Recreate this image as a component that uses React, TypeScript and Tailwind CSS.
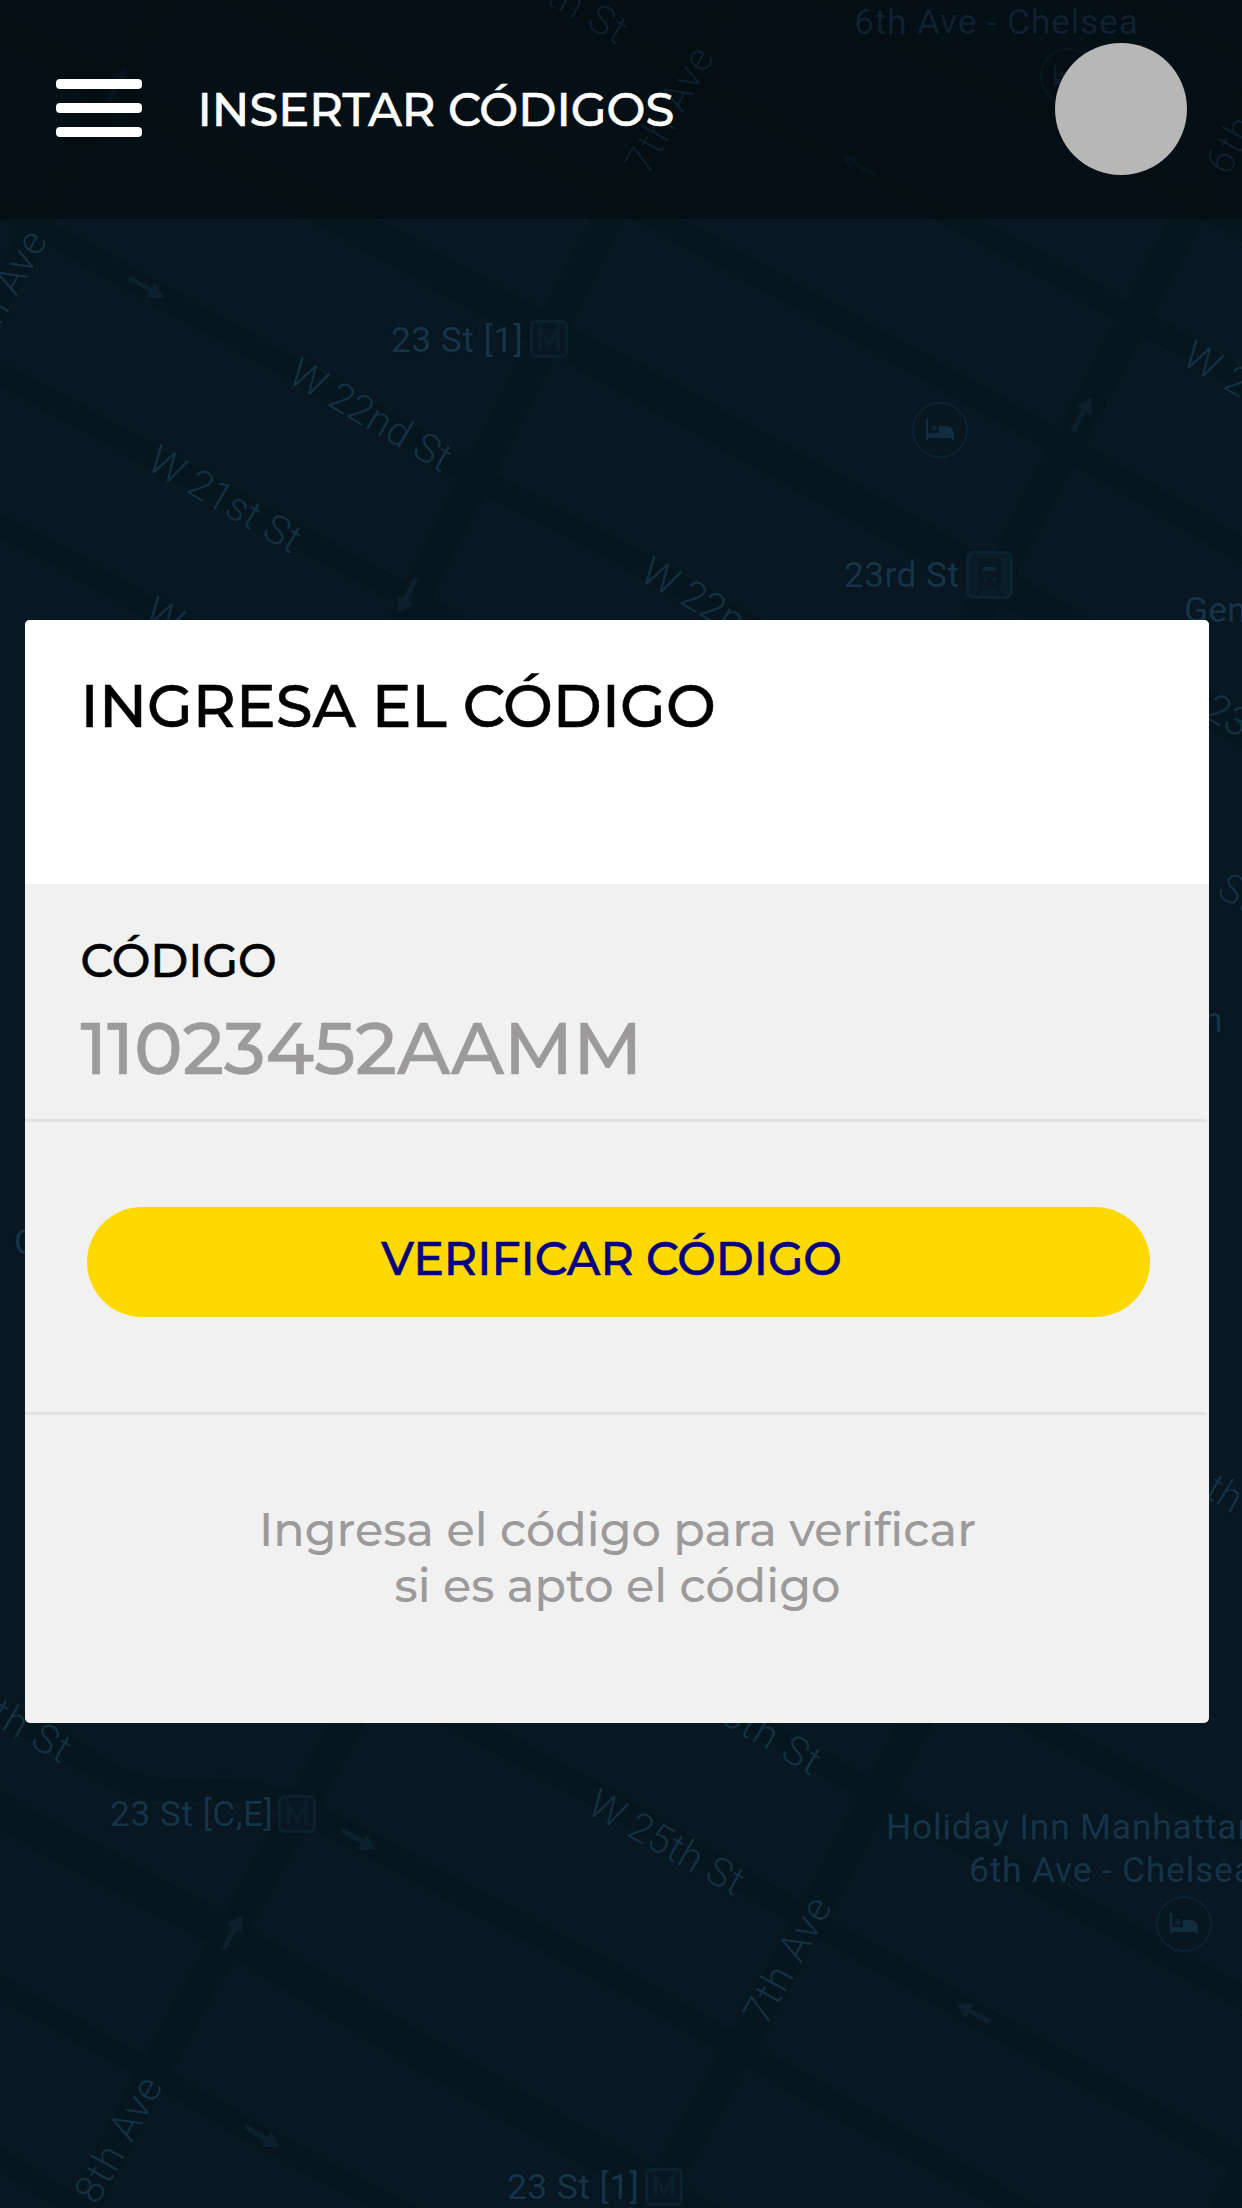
const STREETS: { d: string; w: number }[] = [
  { d: "M-20 15 L120 95 L341 218 L621 373 L940 550 L1262 740", w: 36 },
  { d: "M-20 195 L147 288 L372 413 L467 473 L621 553 L760 632", w: 24 },
  { d: "M-20 362 L226 497 L396 590 L480 640", w: 24 },
  { d: "M-20 515 L79 567 L190 632", w: 24 },
  { d: "M210 -16 L610 195 L660 220 L1064 445 L1262 562", w: 25 },
  { d: "M560 -8 L700 85 L830 155 L961 220 L1130 315 L1262 391", w: 24 },
  { d: "M810 -12 L917 50 L1017 100 L1175 190 L1262 240", w: 24 },
  { d: "M1110 -16 L1262 70", w: 24 },
  { d: "M-20 1700 L67 1748 C110 1775 130 1790 170 1790 C220 1790 250 1786 293 1805 L358 1838 L621 1980 L740 2050 L977 2184 L1040 2222", w: 25 },
  { d: "M-20 1800 L218 1929 L396 2037 L621 2168 L720 2228", w: 36 },
  { d: "M-20 1976 L139 2065 L261 2137 L420 2222", w: 23 },
  { d: "M-20 2147 L100 2222", w: 23 },
  { d: "M440 1710 L621 1808 L684 1846 L799 1914 L973 2013 L1262 2175", w: 25 },
  { d: "M740 1716 L878 1795 L1017 1872 L1262 2008", w: 24 },
  { d: "M1010 1710 L1262 1846", w: 24 },
  { d: "M739 -16 L607 220 L415 597 L400 630", w: 32 },
  { d: "M172 -16 L43 215 L-20 330", w: 29 },
  { d: "M1262 70 L1186 220 L985 600 L965 640", w: 32 },
  { d: "M355 1710 L221 1950 L152 2075 L75 2224", w: 32 },
  { d: "M925 1706 L740 2049 L640 2226", w: 32 },
  { d: "M1262 2130 L1215 2226", w: 28 },
];

const ARROWS: [number, number, number][] = [
  [147, 288, 31],
  [407, 596, 116],
  [1082, 414, -62],
  [858, 165, 210],
  [359, 1840, 30],
  [233, 1932, -62],
  [263, 2137, 31],
  [973, 2013, 209],
  [118, 84, -62],
];

type Label = { t: string; x: number; y: number; len?: number; r?: number; end?: boolean };

const PLACES: Label[] = [
  { t: "23 St [1]", x: 391, y: 352, len: 132 },
  { t: "23rd St", x: 844, y: 587, len: 115 },
  { t: "General", x: 1184, y: 622 },
  { t: "6th Ave - Chelsea", x: 854, y: 34, len: 284 },
  { t: "23 St [C,E]", x: 110, y: 1826, len: 163 },
  { t: "23 St [1]", x: 507, y: 2199, len: 132 },
  { t: "Holiday Inn Manhattan", x: 886, y: 1839, len: 371 },
  { t: "6th Ave - Chelsea", x: 969, y: 1882, len: 284 },
  { t: "n", x: 1203, y: 1032 },
  { t: "C", x: 14, y: 1254 },
];

const ROAD_NAMES: Label[] = [
  { t: "W 22nd St", x: 286, y: 381, r: 30.5, len: 181 },
  { t: "W 21st St", x: 145, y: 468, r: 30.5, len: 170 },
  { t: "W 20th St", x: 142, y: 619, r: 30.5 },
  { t: "W 22nd St", x: 638, y: 579, r: 30.5, len: 181 },
  { t: "W 23rd St", x: 1180, y: 363, r: 30.5, len: 181 },
  { t: "7th Ave", x: 648, y: 177, r: -61, len: 138 },
  { t: "6th Ave", x: 1228, y: 177, r: -61, len: 136 },
  { t: "8th Ave", x: 48, y: 240, r: -61, len: 136, end: true },
  { t: "W 24th St", x: 617, y: 45, r: 30.5, len: 178, end: true },
  { t: "W 24th St", x: 61, y: 1764, r: 30.5, len: 178, end: true },
  { t: "W 26th St", x: 811, y: 1776, r: 30.5, len: 178, end: true },
  { t: "W 25th St", x: 585, y: 1812, r: 29.5, len: 172 },
  { t: "7th Ave", x: 766, y: 2027, r: -61, len: 138 },
  { t: "8th Ave", x: 97, y: 2206, r: -61, len: 137 },
  { t: "23rd", x: 1202, y: 716, r: 30.5 },
  { t: "St", x: 1215, y: 895, r: 30.5 },
  { t: "th", x: 1203, y: 1496, r: 30.5 },
];

const METROS: [number, number][] = [
  [530, 320],
  [278, 1795],
  [645, 2168],
];

const HOTELS: [number, number][] = [
  [940, 430],
  [1184, 1924],
  [1068, 76],
];

function LabelText({ label }: { label: Label }) {
  return (
    <text
      transform={`translate(${label.x} ${label.y}) rotate(${label.r ?? 0})`}
      textLength={label.len}
      textAnchor={label.end ? "end" : "start"}
      stroke="#07151e"
      strokeWidth="2"
      paintOrder="stroke"
    >
      {label.t}
    </text>
  );
}

function MapBackdrop() {
  return (
    <svg
      className="absolute inset-0 h-full w-full"
      viewBox="0 0 1242 2208"
      fill="none"
      aria-hidden="true"
    >
      <rect width="1242" height="2208" fill="#081722" />
      {STREETS.map((s, i) => (
        <path key={i} d={s.d} stroke="#081a22" strokeWidth={s.w + 4} />
      ))}
      {STREETS.map((s, i) => (
        <path key={i} d={s.d} stroke="#07161e" strokeWidth={s.w} />
      ))}
      {ARROWS.map(([x, y, r], i) => (
        <g key={i} transform={`translate(${x} ${y}) rotate(${r})`}>
          <path d="M-20 0H8" stroke="#0c202d" strokeWidth="5" />
          <path d="M4 -9L19 0L4 9Z" fill="#0c202d" />
        </g>
      ))}
      {METROS.map(([x, y], i) => (
        <g key={i} transform={`translate(${x} ${y})`}>
          <rect x="1.5" y="1.5" width="35" height="35" rx="5" fill="#081722" stroke="#0c212e" strokeWidth="3" />
          <path d="M10 30V9L19 25L28 9V30" stroke="#0a1d29" strokeWidth="4.5" />
        </g>
      ))}
      {HOTELS.map(([x, y], i) => (
        <g key={i} transform={`translate(${x} ${y})`}>
          <circle r="27" fill="#08161f" stroke="#0d2230" strokeWidth="2" />
          <path d="M-13 -11V10M13 7V10" stroke="#112b3f" strokeWidth="2.5" />
          <path d="M-13 3H14V8H-13Z" fill="#112b3f" />
          <path d="M-1 -4H8Q14 -2 14 3H-1Z" fill="#112b3f" />
          <circle cx="-6" cy="-2" r="3" fill="#0f2535" />
        </g>
      ))}
      <g transform="translate(966 551)">
        <rect x="1.5" y="1.5" width="44" height="45" rx="6" fill="#0a1c28" stroke="#0c2230" strokeWidth="3" />
        <rect x="12" y="7" width="23" height="30" rx="5" fill="#081721" />
        <path d="M17 18H30" stroke="#0e2636" strokeWidth="4" />
        <path d="M17 28H20M27 28H30" stroke="#0c2230" strokeWidth="3" />
        <path d="M16 37L11 44M31 37L36 44" stroke="#081721" strokeWidth="3" />
      </g>
      <g className="font-['Roboto']" fontSize="35.5" fontWeight="400" fill="#15344a">
        {PLACES.map((l, i) => (
          <LabelText key={i} label={l} />
        ))}
      </g>
      <g className="font-['Roboto']" fontSize="40" fontWeight="300" fill="#143144">
        {ROAD_NAMES.map((l, i) => (
          <LabelText key={i} label={l} />
        ))}
      </g>
    </svg>
  );
}

function Header() {
  return (
    <header className="relative flex h-[218.5px] items-center bg-black/35 pr-[55px] pl-[56px]">
      <button type="button" aria-label="Menú" className="-mt-[2px] flex w-[86px] flex-col gap-[14px]">
        <span className="h-[10px] rounded-[4px] bg-white" />
        <span className="h-[10px] rounded-[4px] bg-white" />
        <span className="h-[10px] rounded-[4px] bg-white" />
      </button>
      <h1 className="mt-[2px] ml-[55.5px] text-[46.3px] leading-none font-medium whitespace-nowrap text-white [-webkit-text-stroke:0.6px_#fff]">
        INSERTAR CÓDIGOS
      </h1>
      <div className="ml-auto size-[132px] rounded-full bg-[#b7b7b7]" />
    </header>
  );
}

export default function App() {
  return (
    <div className="relative h-[2208px] w-[1242px] overflow-hidden bg-[#081722] font-['Montserrat','Inter',sans-serif]">
      <MapBackdrop />
      <Header />
      <main className="relative mt-[401.5px] ml-[24.5px] flex h-[1102.5px] w-[1184px] flex-col overflow-hidden rounded-[5px] bg-[#f1f1f1]">
        <div className="h-[264px] bg-white px-[56px] pt-[56px]">
          <h2 className="text-[59.3px] leading-[60px] font-medium whitespace-nowrap text-black [-webkit-text-stroke:0.6px_#000]">
            INGRESA EL CÓDIGO
          </h2>
        </div>
        <div className="mr-[3px] h-[238px] border-b-[3px] border-[#e2e2e2] px-[56px] pt-[53px]">
          <div className="text-[46px] leading-[48px] font-medium text-black [-webkit-text-stroke:0.6px_#000]">
            CÓDIGO
          </div>
          <div className="mt-[26.5px] text-[72.5px] leading-[72px] font-medium whitespace-nowrap text-[#9c9a9a] [-webkit-text-stroke:0.6px_#9c9a9a]">
            11023452AAMM
          </div>
        </div>
        <div className="mr-[3px] h-[293px] border-b-[3px] border-[#e2e2e2] pt-[85px] pl-[62.5px]">
          <button
            type="button"
            className="flex h-[109.5px] w-[1063px] items-center justify-center rounded-full bg-[#fdd900] pr-[14px] pb-[4px] text-[45.9px] font-medium text-[#060080] [-webkit-text-stroke:0.6px_#060080]"
          >
            VERIFICAR CÓDIGO
          </button>
        </div>
        <p className="pt-[86.5px] pl-[2px] text-center text-[46.2px] leading-[56px] font-medium text-[#9c9a9a]">
          Ingresa el código para verificar
          <br />
          si es apto el código
        </p>
      </main>
    </div>
  );
}
